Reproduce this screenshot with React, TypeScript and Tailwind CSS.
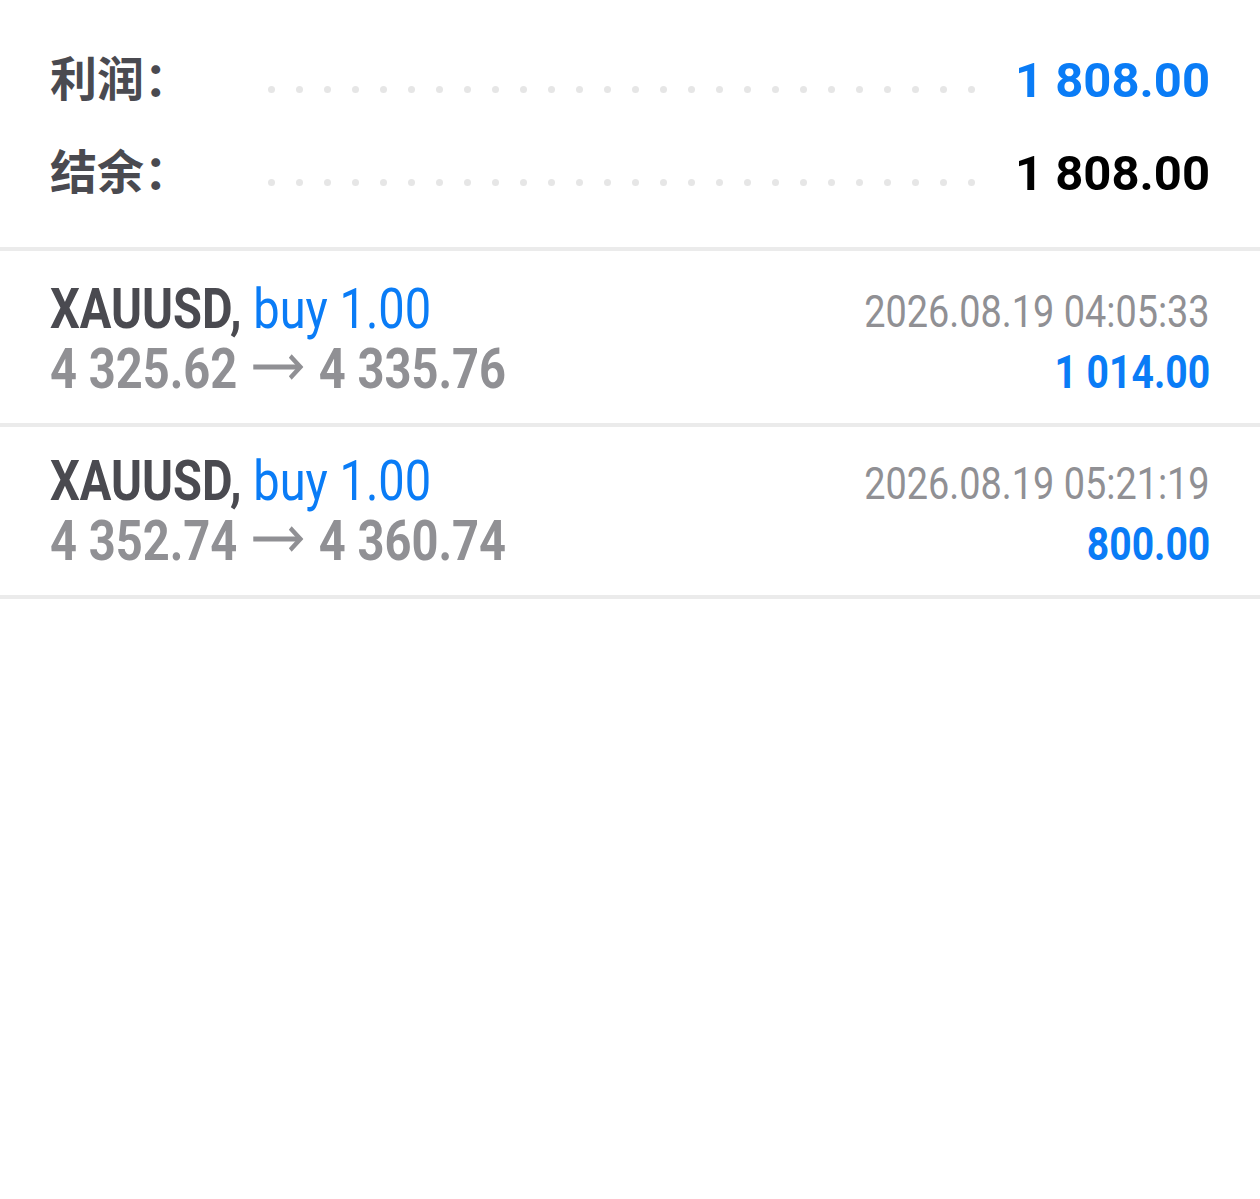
import React from "react";

const ROBOTO = { fontFamily: "Roboto, 'Noto Sans CJK SC', sans-serif" };

function Dots() {
  return (
    <div className="flex-1 flex justify-between items-center self-end mb-[34px]">
      {Array.from({ length: 26 }).map((_, i) => (
        <span key={i} className="block w-[7px] h-[7px] rounded-full bg-[#e6e6e6]" />
      ))}
    </div>
  );
}

function SumRow({ label, value, blue }: { label: string; value: string; blue?: boolean }) {
  return (
    <div className="flex items-stretch h-[93px]">
      <div
        className="w-[218px] flex items-center pb-[8px] text-[47px] font-bold text-[#4a4a50]"
        style={{ fontFamily: "'Noto Sans CJK SC', sans-serif" }}
      >
        {label}
      </div>
      <Dots />
      <div
        className={`w-[235px] flex items-center justify-end text-[49px] font-bold ${blue ? "text-[#0a7cf6]" : "text-black"}`}
        style={ROBOTO}
      >
        {value}
      </div>
    </div>
  );
}

function Arrow() {
  return (
    <svg width="61" height="28" viewBox="0 0 61 28" className="inline-block mx-[18px] align-[7px]">
      <path d="M1 14 H56" stroke="#909094" strokeWidth="5" fill="none" />
      <path d="M45 3 L57 14 L45 25" stroke="#909094" strokeWidth="5" fill="none" strokeLinejoin="miter" />
    </svg>
  );
}

function Trade({ open, close, time, profit }: { open: string; close: string; time: string; profit: string }) {
  return (
    <div className="flex justify-between h-[172px] px-[50px] pt-[24px] border-b-[4px] border-[#ebebeb]" style={ROBOTO}>
      <div className="flex flex-col">
        <div className="h-[60px] leading-[60px] text-[56px] whitespace-nowrap">
          <span className="inline-block origin-left scale-x-[0.84]">
            <span className="font-bold text-[#4a4a50]">XAUUSD,</span>{" "}
            <span className="text-[#0a7cf6]">buy 1.00</span>
          </span>
        </div>
        <div className="h-[60px] leading-[60px] text-[56px] font-bold text-[#909094] whitespace-nowrap">
          <span className="inline-block origin-left scale-x-[0.84]">
            {open}
            <Arrow />
            {close}
          </span>
        </div>
      </div>
      <div className="flex flex-col items-end pt-[3px]">
        <div className="h-[60px] leading-[60px] text-[44px] text-[#909094] whitespace-nowrap">
          <span className="inline-block origin-right scale-x-[0.86]">{time}</span>
        </div>
        <div className="h-[60px] leading-[60px] text-[46px] font-bold text-[#0a7cf6] whitespace-nowrap">
          <span className="inline-block origin-right scale-x-[0.85]">{profit}</span>
        </div>
      </div>
    </div>
  );
}

export default function App() {
  return (
    <div className="w-[1260px] h-[1199px] bg-white overflow-hidden">
      <div className="px-[50px] pt-[34px] pb-[27px] border-b-[4px] border-[#ebebeb]">
        <SumRow label="利润：" value="1 808.00" blue />
        <SumRow label="结余：" value="1 808.00" />
      </div>
      <div className="pt-[4px]">
        <Trade open="4 325.62" close="4 335.76" time="2026.08.19 04:05:33" profit="1 014.00" />
        <Trade open="4 352.74" close="4 360.74" time="2026.08.19 05:21:19" profit="800.00" />
      </div>
    </div>
  );
}
